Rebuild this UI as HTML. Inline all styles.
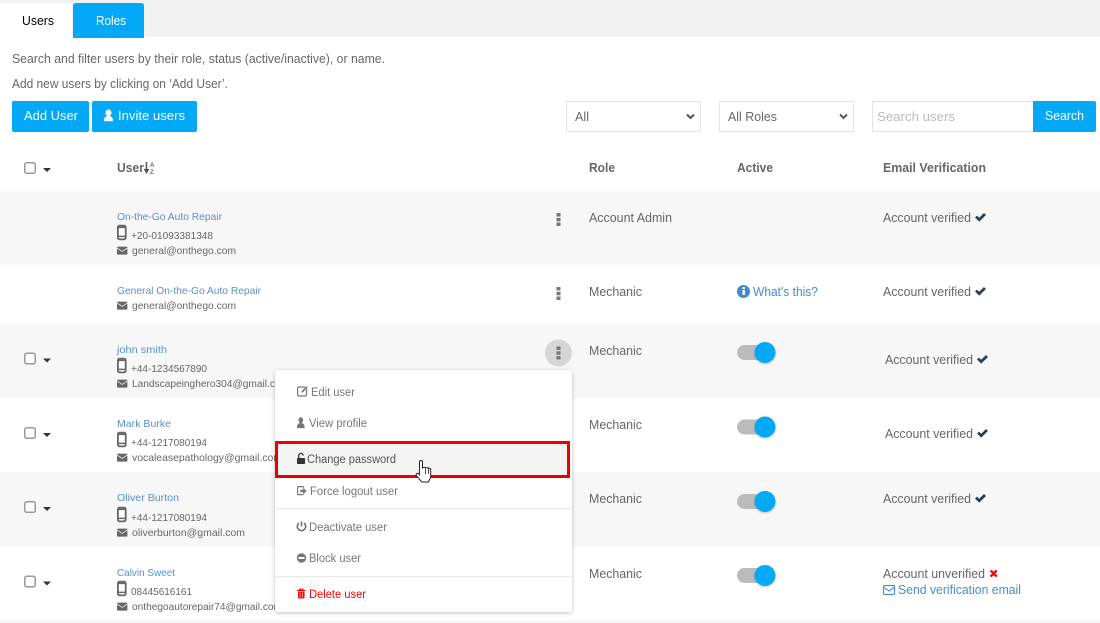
<!DOCTYPE html>
<html><head><meta charset="utf-8"><title>Users</title>
<style>
html,body{margin:0;padding:0;background:#fff;width:1100px;height:623px;overflow:hidden}
svg{display:block;font-family:"Liberation Sans",sans-serif}
text{fill:#666;font-size:12.5px}
.n{fill:#5b8fc9;font-size:10.5px}
.s{fill:#666;font-size:10.5px}
.b{font-weight:bold;fill:#666;font-size:12.5px}
.l{fill:#4a8bd0}
.w{fill:#fff;font-size:13px}
.m{fill:#777}
</style></head><body>
<svg width="1100" height="623" viewBox="0 0 1100 623" xmlns="http://www.w3.org/2000/svg">
<defs>
<g id="phone"><rect x="0.9" y="0.7" width="7.8" height="13.6" rx="1.5" fill="#fff" stroke="#666" stroke-width="1.8"/><path d="M0.8 2.4h8M0.8 11.4h8" stroke="#666" stroke-width="1.5"/><circle cx="4.8" cy="12.9" r="0.8" fill="#fff"/></g>
<g id="env"><rect x="0" y="-0.4" width="10.4" height="8" rx="1" fill="#666"/><path d="M0 1L5.200 4.400L10.400 1" fill="none" stroke="#eee" stroke-width=".8"/></g>
<g id="caret"><path d="M0 0h8L4 4z" fill="#333"/></g>
<g id="cb"><rect x="0.75" y="0.75" width="10.5" height="10.5" rx="2" fill="#fff" stroke="#999" stroke-width="1.5"/></g>
<g id="dots"><rect x="-2" y="-6.5" width="4" height="3.5" fill="#777"/><rect x="-2" y="-1.7" width="4" height="3.5" fill="#777"/><rect x="-2" y="3" width="4" height="3.5" fill="#777"/></g>
<g id="chk"><path d="M0 4.5L2 2.6L4.2 4.8L9 0L11 2L4.2 8.6z" fill="#2c3e50"/></g>
<g id="tog"><rect x="0" y="-7.5" width="30" height="15" rx="7.5" fill="#bbb"/><circle cx="28" cy="0" r="10.5" fill="#03a9f4" style="filter:drop-shadow(0 1px 1px rgba(0,0,0,.2))"/></g>
<filter id="sh" x="-5%" y="-5%" width="110%" height="110%"><feDropShadow dx="0" dy="1" stdDeviation="2" flood-color="#000" flood-opacity=".25"/></filter>
</defs>

<rect x="0" y="0" width="1100" height="37" fill="#f2f2f2"/>
<path d="M0 3h69q3 0 3 3v31H0z" fill="#fff"/>
<path d="M73 6q0-3 3-3h65q3 0 3 3v32H73z" fill="#03a9f6"/>
<text x="22" y="25" textLength="32" lengthAdjust="spacingAndGlyphs" style="fill:#000;font-size:12.5px">Users</text>
<text x="96" y="25" textLength="30" lengthAdjust="spacingAndGlyphs" style="fill:#fff;font-size:12.5px">Roles</text>

<text x="12" y="63" textLength="373" lengthAdjust="spacingAndGlyphs">Search and filter users by their role, status (active/inactive), or name.</text>
<text x="12" y="88" textLength="216" lengthAdjust="spacingAndGlyphs">Add new users by clicking on ‘Add User’.</text>

<rect x="12" y="101" width="77" height="31" rx="2" fill="#03a9f6"/>
<text class="w" x="24" y="120" textLength="54" lengthAdjust="spacingAndGlyphs">Add User</text>
<rect x="92" y="101" width="105" height="31" rx="2" fill="#03a9f6"/>
<path d="M104 120.500c0-3 1.500-4 3.500-4.500c-1.500-1-2-2-2-3c0-2 1.300-3.500 3-3.500s3 1.500 3 3.500c0 1-.5 2-2 3c2 .5 3.500 1.500 3.500 4.500c0 .5-.3.8-1 .8h-7c-.7 0-1-.3-1-.8z" fill="#fff"/>
<text class="w" x="118" y="120" textLength="67" lengthAdjust="spacingAndGlyphs">Invite users</text>

<rect x="566.500" y="101.500" width="134" height="30" fill="#fff" stroke="#e3e3e3"/>
<text x="575" y="121" textLength="14" lengthAdjust="spacingAndGlyphs">All</text>
<path d="M687 114.500l3.500 3.500l3.500-3.500" fill="none" stroke="#555" stroke-width="2"/>
<rect x="719.500" y="101.500" width="134" height="30" fill="#fff" stroke="#e3e3e3"/>
<text x="728" y="121" textLength="49" lengthAdjust="spacingAndGlyphs">All Roles</text>
<path d="M840 114.500l3.500 3.500l3.500-3.500" fill="none" stroke="#555" stroke-width="2"/>
<rect x="872.500" y="101.500" width="161" height="30" fill="#fff" stroke="#e3e3e3"/>
<text x="877" y="121" textLength="78" lengthAdjust="spacingAndGlyphs" style="fill:#bbb">Search users</text>
<path d="M1033 101h61q2 0 2 2v27q0 2-2 2h-61z" fill="#03a9f6"/>
<text class="w" x="1045" y="120" textLength="39" lengthAdjust="spacingAndGlyphs">Search</text>

<use href="#cb" x="24" y="162"/><use href="#caret" x="43" y="168"/>
<text class="b" x="117" y="172" textLength="27" lengthAdjust="spacingAndGlyphs">User</text>
<path d="M146.500 162v9M144.500 169l2 3.500l2-3.500" stroke="#555" stroke-width="1.500" fill="#555"/>
<text x="150" y="167" style="font-size:6px;fill:#666;font-weight:bold">A</text>
<text x="150" y="174" style="font-size:6px;fill:#666;font-weight:bold">Z</text>
<text class="b" x="589" y="172" textLength="26" lengthAdjust="spacingAndGlyphs">Role</text>
<text class="b" x="737" y="172" textLength="36" lengthAdjust="spacingAndGlyphs">Active</text>
<text class="b" x="883" y="172" textLength="103" lengthAdjust="spacingAndGlyphs">Email Verification</text>

<rect x="0" y="191" width="1100" height="74" fill="#f7f7f7"/>
<rect x="0" y="323" width="1100" height="75" fill="#f7f7f7"/>
<rect x="0" y="472" width="1100" height="75" fill="#f7f7f7"/>
<rect x="0" y="620" width="1100" height="3" fill="#f7f7f7"/>

<!-- row 1 -->
<text class="n" x="117" y="220" textLength="105" lengthAdjust="spacingAndGlyphs">On-the-Go Auto Repair</text>
<use href="#phone" x="117" y="225"/>
<text class="s" x="131" y="239" textLength="82" lengthAdjust="spacingAndGlyphs">+20-01093381348</text>
<use href="#env" x="117" y="247"/>
<text class="s" x="132" y="254" textLength="104" lengthAdjust="spacingAndGlyphs">general@onthego.com</text>
<use href="#dots" x="558.500" y="219.500"/>
<text x="589" y="222" textLength="83" lengthAdjust="spacingAndGlyphs">Account Admin</text>
<text x="883" y="222" textLength="88" lengthAdjust="spacingAndGlyphs">Account verified</text>
<use href="#chk" x="975" y="213"/>

<!-- row 2 -->
<text class="n" x="117" y="294" textLength="144" lengthAdjust="spacingAndGlyphs">General On-the-Go Auto Repair</text>
<use href="#env" x="117" y="302"/>
<text class="s" x="132" y="309" textLength="104" lengthAdjust="spacingAndGlyphs">general@onthego.com</text>
<use href="#dots" x="558.500" y="293.500"/>
<text x="589" y="296" textLength="53" lengthAdjust="spacingAndGlyphs">Mechanic</text>
<circle cx="743.500" cy="291.500" r="6.500" fill="#428bca"/>
<rect x="742.500" y="290" width="2.400" height="5" fill="#fff"/><rect x="742.500" y="287" width="2.400" height="2" fill="#fff"/>
<text class="l" x="753" y="296" textLength="65" lengthAdjust="spacingAndGlyphs">What's this?</text>
<text x="883" y="296" textLength="88" lengthAdjust="spacingAndGlyphs">Account verified</text>
<use href="#chk" x="975" y="287"/>

<!-- row 3 -->
<use href="#cb" x="24" y="352.500"/><use href="#caret" x="43" y="358.500"/>
<text class="n" x="117" y="353" textLength="50" lengthAdjust="spacingAndGlyphs">john smith</text>
<use href="#phone" x="117" y="358"/>
<text class="s" x="131" y="372" textLength="76" lengthAdjust="spacingAndGlyphs">+44-1234567890</text>
<use href="#env" x="117" y="380"/>
<text class="s" x="132" y="387" textLength="157" lengthAdjust="spacingAndGlyphs">Landscapeinghero304@gmail.com</text>
<circle cx="558.500" cy="353" r="13.500" fill="#d6d6d6"/>
<use href="#dots" x="558.500" y="353"/>
<text x="589" y="355" textLength="53" lengthAdjust="spacingAndGlyphs">Mechanic</text>
<use href="#tog" x="737" y="352.500"/>
<text x="885" y="364" textLength="88" lengthAdjust="spacingAndGlyphs">Account verified</text>
<use href="#chk" x="977" y="355"/>

<!-- row 4 -->
<use href="#cb" x="24" y="427"/><use href="#caret" x="43" y="433"/>
<text class="n" x="117" y="427" textLength="54" lengthAdjust="spacingAndGlyphs">Mark Burke</text>
<use href="#phone" x="117" y="432"/>
<text class="s" x="131" y="446" textLength="76" lengthAdjust="spacingAndGlyphs">+44-1217080194</text>
<use href="#env" x="117" y="454"/>
<text class="s" x="132" y="461" textLength="150" lengthAdjust="spacingAndGlyphs">vocaleasepathology@gmail.com</text>
<text x="589" y="429" textLength="53" lengthAdjust="spacingAndGlyphs">Mechanic</text>
<use href="#tog" x="737" y="427"/>
<text x="885" y="438" textLength="88" lengthAdjust="spacingAndGlyphs">Account verified</text>
<use href="#chk" x="977" y="429"/>

<!-- row 5 -->
<use href="#cb" x="24" y="501"/><use href="#caret" x="43" y="507"/>
<text class="n" x="117" y="501" textLength="62" lengthAdjust="spacingAndGlyphs">Oliver Burton</text>
<use href="#phone" x="117" y="507"/>
<text class="s" x="131" y="521" textLength="76" lengthAdjust="spacingAndGlyphs">+44-1217080194</text>
<use href="#env" x="117" y="529"/>
<text class="s" x="132" y="536" textLength="113" lengthAdjust="spacingAndGlyphs">oliverburton@gmail.com</text>
<text x="589" y="503" textLength="53" lengthAdjust="spacingAndGlyphs">Mechanic</text>
<use href="#tog" x="737" y="501.500"/>
<text x="883" y="503" textLength="88" lengthAdjust="spacingAndGlyphs">Account verified</text>
<use href="#chk" x="975" y="494"/>

<!-- row 6 -->
<use href="#cb" x="24" y="575.500"/><use href="#caret" x="43" y="581.500"/>
<text class="n" x="117" y="576" textLength="58" lengthAdjust="spacingAndGlyphs">Calvin Sweet</text>
<use href="#phone" x="117" y="581"/>
<text class="s" x="131" y="595" textLength="61" lengthAdjust="spacingAndGlyphs">08445616161</text>
<use href="#env" x="117" y="603"/>
<text class="s" x="132" y="610" textLength="150" lengthAdjust="spacingAndGlyphs">onthegoautorepair74@gmail.com</text>
<text x="589" y="578" textLength="53" lengthAdjust="spacingAndGlyphs">Mechanic</text>
<use href="#tog" x="737" y="575.500"/>
<text x="883" y="578" textLength="102" lengthAdjust="spacingAndGlyphs">Account unverified</text>
<path d="M989.800 571.300l1.700-1.700l2.200 2.200l2.200-2.200l1.700 1.700l-2.200 2.200l2.200 2.200l-1.700 1.700l-2.200-2.200l-2.200 2.200l-1.700-1.700l2.200-2.200z" fill="#f00"/>
<rect x="883.600" y="585.600" width="11" height="8.800" rx="1" fill="#fff" stroke="#4a8bd0" stroke-width="1.100"/>
<path d="M884 587.500l5 3.500l5-3.500" fill="none" stroke="#4a8bd0" stroke-width="1.100"/>
<text class="l" x="898" y="594" textLength="123" lengthAdjust="spacingAndGlyphs">Send verification email</text>

<!-- menu -->
<rect x="275" y="370" width="297" height="242" rx="3" fill="#fff" filter="url(#sh)"/>
<rect x="297.600" y="387" width="9" height="9" rx="1.500" fill="none" stroke="#777" stroke-width="1.200"/>
<path d="M301 393l.5-2l5-5l1.500 1.500l-5 5z" fill="#777" stroke="#fff" stroke-width=".5"/>
<text class="m" x="311" y="396" textLength="44" lengthAdjust="spacingAndGlyphs" style="font-size:11.500px">Edit user</text>
<path d="M297 427.500c0-3 1-4 3-4.500c-1-.8-1.500-1.700-1.500-2.800c0-1.700 1-2.900 2.300-2.900s2.300 1.200 2.300 2.900c0 1.100-.5 2-1.500 2.800c2 .5 3 1.500 3 4.500c0 .4-.3.600-.8.600h-6c-.5 0-.8-.2-.8-.6z" fill="#777"/>
<text class="m" x="309" y="427" textLength="58" lengthAdjust="spacingAndGlyphs" style="font-size:11.500px">View profile</text>

<rect x="276.500" y="442.500" width="292" height="34" fill="#f3f3f3" stroke="#ee0000" stroke-width="3"/>
<rect x="297" y="458" width="8" height="6" rx=".8" fill="#333"/>
<path d="M298.700 458v-2.400a2.200 2.200 0 0 1 4.400 0" fill="none" stroke="#333" stroke-width="1.300"/>
<text x="307" y="463" textLength="89" lengthAdjust="spacingAndGlyphs" style="font-size:11.500px;fill:#555">Change password</text>

<path d="M419.500 462c0-2 3-2 3 0v6.500c.3-1.500 2.800-1.500 3 0c.3-1.200 2.700-1.200 2.900.3c.4-1 2.300-.8 2.300.7v6c0 3-1.500 5-2.500 6.500h-6.500c-1-1.500-5-5.500-5.500-7c-.4-1.500 1.300-2.300 2.300-1.300l.9 1.100z" fill="#fff" stroke="#222" stroke-width="1"/>
<path d="M425.500 469v5M428.400 469v5" stroke="#222" stroke-width=".8"/>

<rect x="297.600" y="486.600" width="6" height="8" rx="1" fill="none" stroke="#777" stroke-width="1.200"/>
<path d="M300 489.500h3v-2l4 3.500l-4 3.500v-2h-3z" fill="#777" stroke="#fff" stroke-width=".4"/>
<text class="m" x="310" y="495" textLength="88" lengthAdjust="spacingAndGlyphs" style="font-size:11.500px">Force logout user</text>
<rect x="275" y="508" width="297" height="1" fill="#e8e8e8"/>
<path d="M299 523a4.200 4.200 0 1 0 5 0" fill="none" stroke="#777" stroke-width="1.600"/>
<path d="M301.500 521.500v5" stroke="#777" stroke-width="1.600"/>
<text class="m" x="309" y="531" textLength="78" lengthAdjust="spacingAndGlyphs" style="font-size:11.500px">Deactivate user</text>
<circle cx="301.500" cy="558" r="4.700" fill="#777"/><rect x="298.500" y="557" width="6" height="2" fill="#fff"/>
<text class="m" x="309" y="562" textLength="52" lengthAdjust="spacingAndGlyphs" style="font-size:11.500px">Block user</text>
<rect x="275" y="576" width="297" height="1" fill="#e8e8e8"/>
<path d="M297 590.500h8.500M299.500 590.500v-1.300h3.500v1.300" fill="none" stroke="#f00" stroke-width="1.100"/>
<path d="M298 591.500h6.500v6q0 1-1 1h-4.500q-1 0-1-1z" fill="#f00"/>
<path d="M300 592.500v5M302.500 592.500v5" stroke="#fff" stroke-width=".6"/>
<text x="309" y="598" textLength="57" lengthAdjust="spacingAndGlyphs" style="font-size:11.500px;fill:#f00">Delete user</text>
</svg>
</body></html>
